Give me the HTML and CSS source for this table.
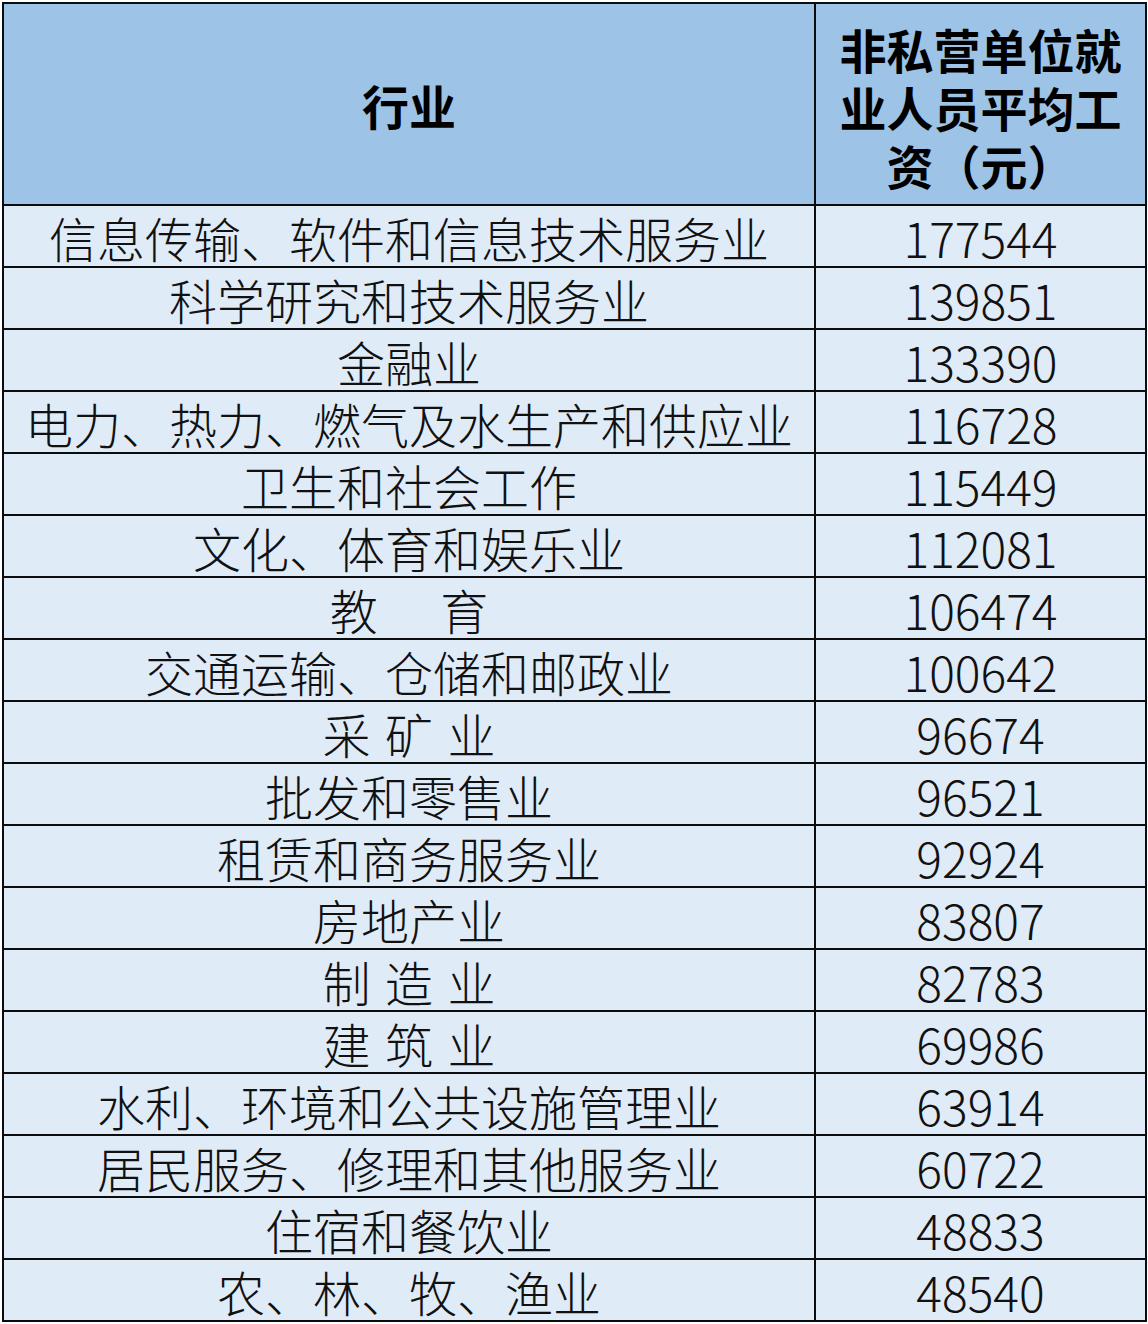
FILE: index.html
```html
<!DOCTYPE html>
<html lang="zh-CN">
<head>
<meta charset="utf-8">
<title>非私营单位就业人员平均工资</title>
<link rel="stylesheet" href="styles.css">
</head>
<body>
<div class="table">
  <div class="cell head">行业</div>
  <div class="cell head head-right">非私营单位就业人员平均工资（元）</div>

  <div class="cell">信息传输、软件和信息技术服务业</div><div class="cell num">177544</div>
  <div class="cell">科学研究和技术服务业</div><div class="cell num">139851</div>
  <div class="cell">金融业</div><div class="cell num">133390</div>
  <div class="cell">电力、热力、燃气及水生产和供应业</div><div class="cell num">116728</div>
  <div class="cell">卫生和社会工作</div><div class="cell num">115449</div>
  <div class="cell">文化、体育和娱乐业</div><div class="cell num">112081</div>
  <div class="cell"><span class="wide">教　 育</span></div><div class="cell num">106474</div>
  <div class="cell">交通运输、仓储和邮政业</div><div class="cell num">100642</div>
  <div class="cell"><span class="spaced">采 矿 业</span></div><div class="cell num">96674</div>
  <div class="cell">批发和零售业</div><div class="cell num">96521</div>
  <div class="cell">租赁和商务服务业</div><div class="cell num">92924</div>
  <div class="cell">房地产业</div><div class="cell num">83807</div>
  <div class="cell"><span class="spaced">制 造 业</span></div><div class="cell num">82783</div>
  <div class="cell"><span class="spaced">建 筑 业</span></div><div class="cell num">69986</div>
  <div class="cell">水利、环境和公共设施管理业</div><div class="cell num">63914</div>
  <div class="cell">居民服务、修理和其他服务业</div><div class="cell num">60722</div>
  <div class="cell">住宿和餐饮业</div><div class="cell num">48833</div>
  <div class="cell">农、林、牧、渔业</div><div class="cell num">48540</div>
</div>
</body>
</html>
```
FILE: styles.css
```css
html, body {
  margin: 0;
  padding: 0;
  background: #ffffff;
}

body {
  padding: 2px 0 0 2px;
  font-family: "Noto Sans CJK SC", "Noto Sans", sans-serif;
  color: #111111;
}

.table {
  display: grid;
  grid-template-columns: 810px 329px;
  grid-template-rows: 200px repeat(18, 60px);
  gap: 2px;
  padding: 2px;
  background: #0c0c0c;
  width: max-content;
}

.cell {
  background: #e0ebf8;
  display: flex;
  align-items: center;
  justify-content: center;
  text-align: center;
  font-size: 48px;
  font-weight: 300;
  line-height: 60px;
  padding-top: 1px;
  white-space: nowrap;
}

.head {
  background: #9dc3e6;
  font-size: 47px;
  font-weight: 700;
  color: #000000;
}

.head-right {
  white-space: normal;
  line-height: 58px;
  padding: 6px 20px 0;
}

.num {
  font-size: 48px;
  padding-top: 1px;
}

.spaced {
  word-spacing: 4px;
}

.wide {
  word-spacing: 4px;
}
```
